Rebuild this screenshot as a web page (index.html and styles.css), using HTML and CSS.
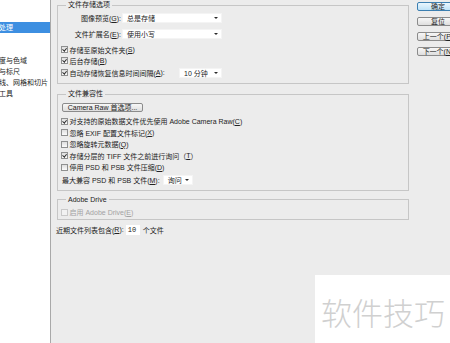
FILE: index.html
```html
<!DOCTYPE html>
<html>
<head>
  <meta charset="utf-8">
  <title>首选项 - 文件处理</title>
  <link rel="stylesheet" href="styles.css">
</head>
<body>

  <div class="dialog">

    <!-- left list of preference pages -->
    <div class="nav">
      <ul class="nav-list">
        <li>常规</li>
        <li>界面</li>
        <li class="active">文件处理</li>
        <li>性能</li>
        <li>光标</li>
        <li>透明度与色域</li>
        <li>单位与标尺</li>
        <li>参考线、网格和切片</li>
        <li>增效工具</li>
        <li>文字</li>
        <li>3D</li>
      </ul>
    </div>

    <div class="pane">

      <fieldset class="group save-group">
        <legend>文件存储选项</legend>
        <div class="row field-row">
          <span class="label">图像预览(<u>G</u>):</span>
          <span class="select wide">总是存储<i class="arrow"></i></span>
        </div>
        <div class="row field-row">
          <span class="label">文件扩展名(<u>E</u>):</span>
          <span class="select wide">使用小写<i class="arrow"></i></span>
        </div>
        <div class="row check-row first-check">
          <span class="cb on"></span>存储至原始文件夹(<u>S</u>)
        </div>
        <div class="row check-row">
          <span class="cb on"></span>后台存储(<u>B</u>)
        </div>
        <div class="row check-row autosave-row">
          <span class="cb on"></span>自动存储恢复信息时间间隔(<u>A</u>):
          <span class="select small">10 分钟<i class="arrow"></i></span>
        </div>
      </fieldset>

      <fieldset class="group compat-group">
        <legend>文件兼容性</legend>
        <button class="btn raw-btn">Camera Raw 首选项...</button>
        <div class="row tall-row">
          <span class="cb on"></span>对支持的原始数据文件优先使用 Adobe Camera Raw(<u>C</u>)
        </div>
        <div class="row tall-row">
          <span class="cb"></span>忽略 EXIF 配置文件标记(<u>X</u>)
        </div>
        <div class="row tall-row">
          <span class="cb"></span>忽略旋转元数据(<u>Q</u>)
        </div>
        <div class="row tall-row">
          <span class="cb on"></span>存储分层的 TIFF 文件之前进行询问（<u>T</u>）
        </div>
        <div class="row tall-row">
          <span class="cb"></span>停用 PSD 和 PSB 文件压缩(<u>D</u>)
        </div>
        <div class="row max-row">
          最大兼容 PSD 和 PSB 文件(<u>M</u>):
          <span class="select tiny">询问<i class="arrow"></i></span>
        </div>
      </fieldset>

      <fieldset class="group drive-group">
        <legend>Adobe Drive</legend>
        <div class="row check-row disabled">
          <span class="cb"></span>启用 Adobe Drive(<u>E</u>)
        </div>
      </fieldset>

      <div class="row recent-row">
        近期文件列表包含(<u>R</u>):
        <span class="num-input">10</span>
        个文件
      </div>

    </div>

    <div class="actions">
      <button class="btn default">确定</button>
      <button class="btn">复位</button>
      <button class="btn">上一个(<u>P</u>)</button>
      <button class="btn">下一个(<u>N</u>)</button>
    </div>

  </div>

  <div class="watermark">软件技巧</div>

</body>
</html>
```

FILE: styles.css
```css
body {
  margin: 0;
  width: 450px;
  height: 343px;
  overflow: hidden;
  position: relative;
  background-color: #ececec;
  font-family: "Liberation Sans", "Noto Sans CJK SC", sans-serif;
  font-size: 7px;
  color: #222;
}

u {
  text-decoration-thickness: 1px;
}

.dialog {
  display: flex;
  height: 343px;
}

/* Left page list */
.nav {
  flex: none;
  width: 50px;
  background-color: #fff;
  border-right: 1px solid #a9a9a9;
  overflow: hidden;
}

.nav-list {
  list-style: none;
  margin: 0 0 0 -15px;
  padding: 0;
}

.nav-list li {
  height: 11px;
  line-height: 11px;
  white-space: nowrap;
}

.nav-list li.active {
  background-color: #3d8fe1;
  color: #fff;
}

/* Main pane */
.pane {
  flex: none;
  width: 352px;
  padding-left: 6px;
}

.group {
  margin: 0;
  min-width: 0;
  border: 1px solid #c6c6c6;
  padding: 3px 3px 5px;
}

.group legend {
  margin-left: 5px;
  padding: 0 2px;
  line-height: 10px;
}

.row {
  display: flex;
  align-items: center;
  white-space: nowrap;
}

.field-row {
  height: 10px;
  margin-bottom: 6px;
}

.label {
  width: 60px;
  text-align: right;
}

.check-row {
  height: 11px;
}

.first-check {
  margin-top: -1px;
}

.autosave-row {
  width: 161px;
  margin-top: 1px;
}

.compat-group {
  margin-top: 5px;
  padding-bottom: 4.5px;
}

.tall-row {
  height: 11.5px;
}

.max-row {
  height: 10px;
  margin-top: 2px;
  margin-left: 1px;
}

.drive-group {
  margin-top: 4px;
  padding-top: 2px;
  padding-bottom: 1px;
}

.disabled {
  color: #a3a3a3;
}

.recent-row {
  height: 10px;
  margin-top: 5px;
  margin-left: -1px;
}

/* Checkboxes */
.cb {
  flex: none;
  position: relative;
  width: 5px;
  height: 5px;
  margin-right: 1.5px;
  border: 1px solid #8f9090;
  background: linear-gradient(#dedede, #fbfbfb);
}

.cb.on::after {
  content: "";
  position: absolute;
  left: 1.4px;
  top: -0.2px;
  width: 1.6px;
  height: 3.4px;
  border: solid #2c2c2c;
  border-width: 0 1px 1px 0;
  transform: rotate(40deg);
}

.disabled .cb {
  border-color: #c9c9c9;
  background: #f2f2f2;
}

/* Drop-downs */
.select {
  flex: none;
  display: flex;
  align-items: center;
  height: 10px;
  box-sizing: border-box;
  padding: 0 3px 0 4px;
  background-color: #fff;
  border: 1px solid #f4f4f4;
}

.select.wide {
  width: 100px;
  margin-left: 1px;
}

.select.small {
  width: 43px;
  margin-left: auto;
  padding-left: 4px;
}

.select.tiny {
  width: 30px;
  margin-left: 3px;
}

.arrow {
  margin-left: auto;
  border-left: 2px solid transparent;
  border-right: 2px solid transparent;
  border-top: 2.5px solid #2a2a2a;
}

.num-input {
  width: 14px;
  height: 10px;
  line-height: 10px;
  margin: 0 3px 0 2px;
  padding-left: 2px;
  box-sizing: border-box;
  background-color: #fff;
  font-family: "Liberation Mono", monospace;
}

/* Buttons */
.btn {
  display: block;
  box-sizing: border-box;
  height: 9px;
  padding: 0;
  font: inherit;
  line-height: 7px;
  color: #222;
  text-align: center;
  white-space: nowrap;
  border: 1px solid #8b8b8b;
  border-radius: 2px;
  background: linear-gradient(#f7f7f7, #dedede);
}

.btn.default {
  border-color: #3c7fb1;
  background: linear-gradient(#eaf6fd, #bfe2f7);
}

.raw-btn {
  width: 81px;
  margin: 1px 0 3.5px 1px;
}

.actions {
  flex: none;
  display: flex;
  flex-direction: column;
  gap: 6px;
  margin-left: 8px;
  padding-top: 2px;
}

.actions .btn {
  width: 42px;
}

/* Site watermark pasted over the corner */
.watermark {
  position: absolute;
  left: 315px;
  top: 275px;
  right: 0;
  bottom: 0;
  padding: 21px 0 0 6px;
  background-color: #fff;
  font-family: "Noto Sans CJK SC", sans-serif;
  font-size: 31px;
  font-weight: 300;
  line-height: 31px;
  color: #d0d0d0;
  white-space: nowrap;
}
```
